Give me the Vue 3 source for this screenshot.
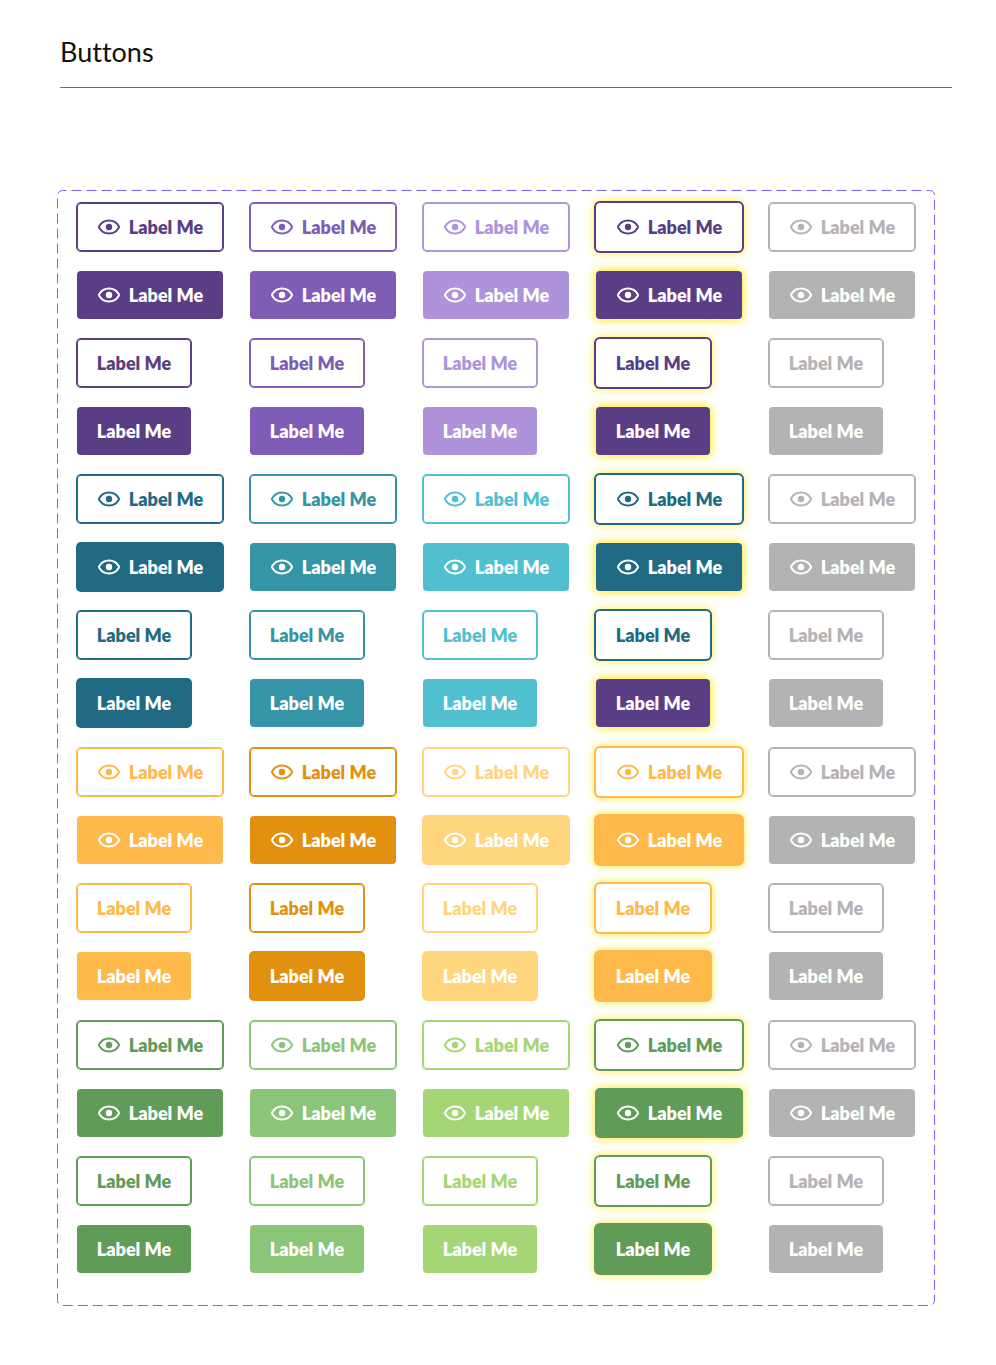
<script setup>
const rowKinds = [
  { icon: true, filled: false },
  { icon: true, filled: true },
  { icon: false, filled: false },
  { icon: false, filled: true },
]

const states = ['default', 'hover', 'pressed', 'focus', 'disabled']

// Colours per state; edges holds the outer edge width of the two filled rows.
const palettes = [
  {
    name: 'purple',
    colors: ['#5a3e85', '#7f5cb5', '#ae93db', '#5a3e85', '#b3b3b3'],
    edges: [[0, 0, 0, 0, 0], [0, 0, 0, 0, 0]],
  },
  {
    name: 'teal',
    colors: ['#206a84', '#3594a5', '#50bfd0', '#206a84', '#b3b3b3'],
    edges: [[1, 0, 0, 0, 0], [1, 0, 0, 0, 0]],
    lastFocus: '#5a3e85',
  },
  {
    name: 'orange',
    colors: ['#ffb94b', '#e29010', '#ffd57e', '#ffb94b', '#b3b3b3'],
    edges: [[0, 0, 1, 2, 0], [0, 1, 1, 2, 0]],
  },
  {
    name: 'green',
    colors: ['#609b58', '#8bc577', '#a5d676', '#609b58', '#b3b3b3'],
    edges: [[0, 0, 0, 1, 0], [0, 0, 0, 2, 0]],
  },
]

const groups = palettes.map((p) => ({
  name: p.name,
  buttons: rowKinds.flatMap((kind, r) =>
    states.map((state, c) => ({
      key: `${r}-${state}`,
      icon: kind.icon,
      disabled: state === 'disabled',
      color: r === 3 && state === 'focus' && p.lastFocus ? p.lastFocus : p.colors[c],
      classes: [
        kind.filled ? 'filled' : 'outlined',
        kind.icon ? 'wide' : 'narrow',
        state,
        kind.filled ? `edge-${p.edges[r === 1 ? 0 : 1][c]}` : state === 'focus' ? 'edge-2' : 'edge-1',
      ],
    }))
  ),
}))
</script>

<template>
  <main class="page">
    <header class="head">
      <h1>Buttons</h1>
    </header>
    <section class="board" aria-label="Button variants">
      <svg class="frame" aria-hidden="true"><rect x=".5" y=".5" rx="5" /></svg>
      <div v-for="g in groups" :key="g.name" class="group" :class="g.name">
        <button
          v-for="b in g.buttons"
          :key="b.key"
          type="button"
          class="btn"
          :class="b.classes"
          :style="{ '--c': b.color }"
          :disabled="b.disabled"
        >
          <svg v-if="b.icon" class="eye" viewBox="0 0 24 24" aria-hidden="true">
            <path d="M2.200 11.200C4.400 7.400 7.900 5.500 12 5.500S19.600 7.400 21.800 11.200Q22.200 12 21.800 12.800C19.600 16.600 16.100 18.500 12 18.500S4.400 16.600 2.200 12.800Q1.800 12 2.200 11.200Z" />
            <circle cx="12" cy="12" r="3.200" />
          </svg>
          <span>Label Me</span>
        </button>
      </div>
    </section>
  </main>
</template>

<style>
body {
  margin: 0;
  background: #fff;
}
</style>

<style scoped>
.page {
  box-sizing: border-box;
  padding: 34px 44px 59px 57px;
  font-family: Lato, "Open Sans", sans-serif;
  font-variant-ligatures: none;
}
.head {
  margin-left: 3px;
  border-bottom: 1px solid #6e6e6e;
}
h1 {
  margin: 0;
  padding-bottom: 17px;
  font-size: 27px;
  line-height: 36px;
  font-weight: 400;
  color: #111;
}
.board {
  position: relative;
  box-sizing: border-box;
  margin: 102px 17px 0 0;
  padding: 13px 20px 33px;
}
.frame {
  position: absolute;
  inset: 0;
  width: 100%;
  height: 100%;
  pointer-events: none;
}
.frame rect {
  width: calc(100% - 1px);
  height: calc(100% - 1px);
  fill: none;
  stroke: #7b61ff;
  stroke-width: 1;
  stroke-dasharray: 10 5;
  stroke-dashoffset: 6;
}
.group {
  display: grid;
  grid-template-columns: repeat(4, minmax(146px, 1fr)) 146px;
  column-gap: 27px;
  row-gap: 20px;
  justify-items: start;
}
.teal {
  margin: 20px 0 21px;
}
.green {
  margin-top: 21px;
}
.btn {
  --edge: 0px;
  --inner: 0px;
  --glow: 0 0 0 0 transparent;
  display: flex;
  align-items: center;
  justify-content: center;
  gap: 8px;
  box-sizing: border-box;
  height: 48px;
  padding: 0;
  border: 0;
  border-radius: 4px;
  font: inherit;
  font-size: 18px;
  line-height: 24px;
  font-weight: 800;
  font-variant-ligatures: none;
  white-space: nowrap;
  cursor: pointer;
  box-shadow: inset 0 0 0 var(--inner) var(--c), 0 0 0 var(--edge) var(--c), var(--glow);
}
.btn:disabled {
  cursor: default;
}
.wide {
  width: 146px;
}
.narrow {
  width: 114px;
}
.filled {
  background: var(--c);
  color: #fff;
}
.outlined {
  --inner: 1px;
  background: #fff;
  color: var(--c);
}
.edge-1 {
  --edge: 1px;
}
.edge-2 {
  --edge: 2px;
}
.focus {
  --glow: 0 0 8px 2px #ffeb3b;
}
.outlined.focus {
  --inner: 0px;
}
.eye {
  width: 24px;
  height: 24px;
  flex: none;
}
.eye path {
  fill: none;
  stroke: currentColor;
  stroke-width: 2;
  stroke-linejoin: round;
}
.eye circle {
  fill: currentColor;
}
</style>
